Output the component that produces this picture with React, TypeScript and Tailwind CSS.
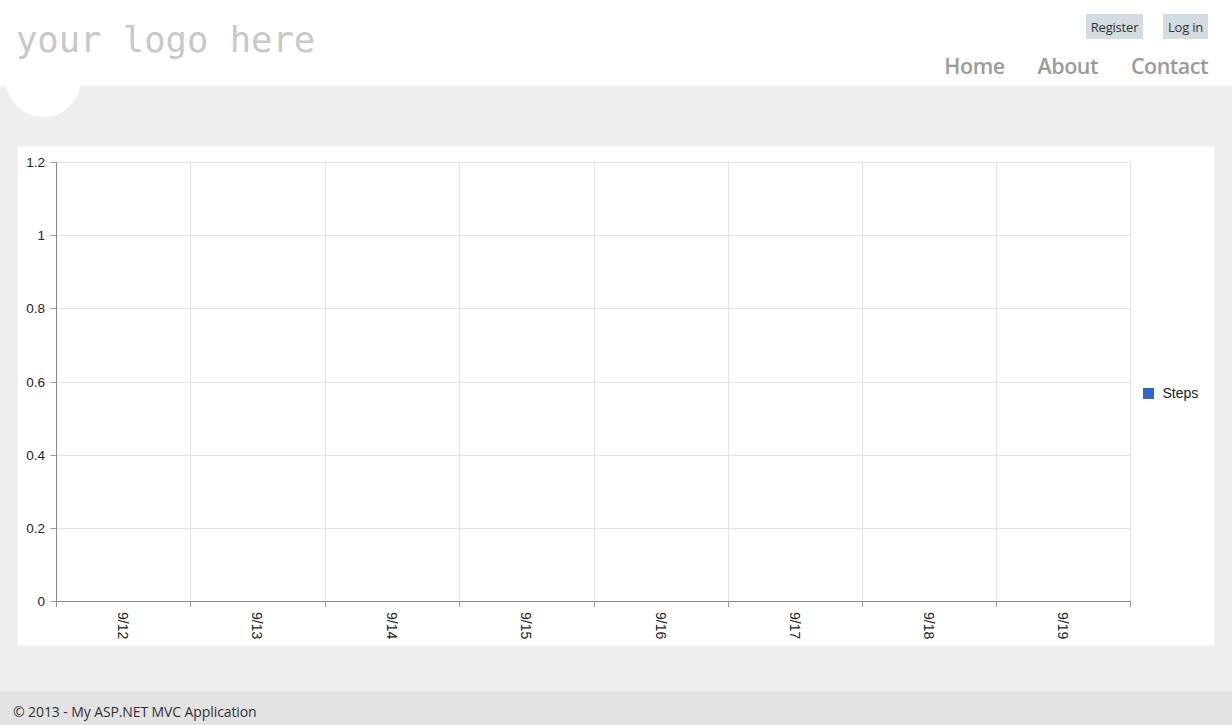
import React from "react";

const yTicks = [
  { label: "1.2", y: 16.5 },
  { label: "1", y: 89.5 },
  { label: "0.8", y: 162.5 },
  { label: "0.6", y: 236.5 },
  { label: "0.4", y: 309.5 },
  { label: "0.2", y: 382.5 },
  { label: "0", y: 455.5 },
];

const xLines = [38.5, 172.5, 307.5, 441.5, 576.5, 710.5, 844.5, 978.5, 1112.5];
const days = ["9/12", "9/13", "9/14", "9/15", "9/16", "9/17", "9/18", "9/19"];

function StepsChart() {
  return (
    <svg width="1200" height="500" viewBox="0 0 1200 500" className="block">
      <g fontFamily="'Liberation Sans', Arial, sans-serif" fill="#222">
        {yTicks.map((t) => (
          <line key={"h" + t.label} x1={38} x2={1113} y1={t.y} y2={t.y} stroke="#e3e3e3" strokeWidth={1} />
        ))}
        {xLines.map((x) => (
          <line key={"v" + x} x1={x} x2={x} y1={16} y2={456} stroke="#e3e3e3" strokeWidth={1} />
        ))}

        {/* axes */}
        <line x1={38.5} x2={38.5} y1={16} y2={456} stroke="#888" />
        <line x1={38} x2={1113} y1={455.5} y2={455.5} stroke="#888" />

        {yTicks.map((t) => (
          <g key={"yl" + t.label}>
            <line x1={32.5} x2={38.5} y1={t.y} y2={t.y} stroke="#999" />
            <text x={27} y={t.y + 4.8} fontSize={13.5} textAnchor="end">
              {t.label}
            </text>
          </g>
        ))}

        {xLines.map((x) => (
          <line key={"xt" + x} x1={x} x2={x} y1={455.5} y2={461} stroke="#999" />
        ))}

        {days.map((d, i) => {
          const cx = (xLines[i] + xLines[i + 1]) / 2 - 6;
          return (
            <text key={d} x={cx} y={466} fontSize={14} transform={`rotate(90 ${cx} 466)`}>
              {d}
            </text>
          );
        })}

        {/* legend */}
        <rect x={1125} y={242} width={11} height={11} fill="#3366cc" />
        <text x={1144.5} y={251.5} fontSize={14}>
          Steps
        </text>
      </g>
    </svg>
  );
}

export default function App() {
  return (
    <div className="relative min-h-[725px] bg-[#efeeef] font-['Open_Sans',sans-serif] text-[#333]">
      <div className="absolute left-[6px] top-[42px] h-[75px] w-[75px] rounded-full bg-white" />

      <header className="relative flex h-[86px] justify-between bg-white pl-[16px] pr-[24px]">
        <p className="pt-[22px] font-['DejaVu_Sans_Mono',monospace] text-[35.5px] leading-none text-[#c8c8c8]">
          your logo here
        </p>
        <div className="flex flex-col items-end pt-[14px]">
          <ul className="flex h-[25px] gap-[20px] text-[13px]">
            <li className="flex w-[57px] items-center justify-center bg-[#d3dce0] pt-[2px] tracking-[-0.2px]">Register</li>
            <li className="flex w-[45px] items-center justify-center bg-[#d3dce0] pt-[2px] tracking-[-0.2px]">Log in</li>
          </ul>
          <nav className="mt-[16px] flex gap-[33px] text-[21.5px] font-semibold leading-none tracking-[-0.5px] text-[#9b9b9b]">
            <span>Home</span>
            <span>About</span>
            <span>Contact</span>
          </nav>
        </div>
      </header>

      <main className="relative px-[18px] pb-[45px] pt-[60px]">
        <div className="h-[500px] bg-white">
          <StepsChart />
        </div>
      </main>

      <footer className="h-[100px] bg-[#e2e2e2] pl-[13px] pt-[14px] text-[14px] leading-none tracking-[-0.1px]">
        © 2013 - My ASP.NET MVC Application
      </footer>
    </div>
  );
}
